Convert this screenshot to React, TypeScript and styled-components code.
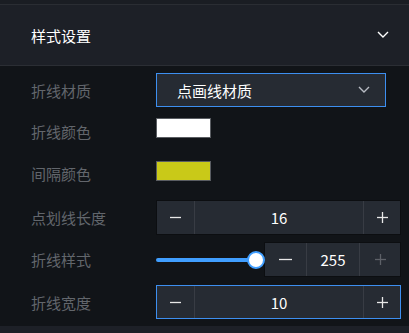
import React from 'react'
import styled, { createGlobalStyle } from 'styled-components'

const GlobalStyle = createGlobalStyle`
  body {
    margin: 0;
    background: #111418;
    font-family: 'Noto Sans CJK SC', 'Noto Sans', sans-serif;
  }
`

const Page = styled.div`
  width: 409px;
  height: 333px;
  background: #111418;
  display: flex;
  flex-direction: column;
`

const TopStrip = styled.div`
  height: 4px;
  background: #1a1d23;
  border-bottom: 1px solid #2a2d33;
`

const Header = styled.div`
  height: 60px;
  display: flex;
  align-items: center;
  justify-content: space-between;
  padding: 0 20px 0 31px;
  background: #1d2027;
  border-bottom: 1px solid #2b2e34;
  color: #fff;
  font-size: 15px;
`

const Body = styled.div`
  flex: 1;
  padding-top: 7px;
`

const BottomStrip = styled.div`
  height: 7px;
  background: #1d2027;
`

const Row = styled.div<{ $mt?: number; $h?: number }>`
  display: flex;
  align-items: center;
  height: ${(p) => p.$h ?? 34}px;
  margin-top: ${(p) => p.$mt ?? 0}px;
`

const Label = styled.div<{ $dy?: number }>`
  width: 125px;
  padding-left: 31px;
  color: #62666c;
  font-size: 15px;
  transform: translateY(${(p) => p.$dy ?? 0}px);
`

const Select = styled.div`
  width: 230px;
  height: 34px;
  box-sizing: border-box;
  display: flex;
  align-items: center;
  justify-content: space-between;
  padding: 0 15px 0 20px;
  background: #262b33;
  border: 1px solid #3d8ff0;
  color: #fff;
  font-size: 15px;
`

const Swatch = styled.div<{ $color: string }>`
  width: 55px;
  height: 20px;
  box-sizing: border-box;
  background: ${(p) => p.$color};
  border: 1px solid #5a5d62;
`

const NumberBox = styled.div<{ $w: number; $focus?: boolean }>`
  width: ${(p) => p.$w}px;
  height: ${(p) => (p.$focus ? 34 : 35)}px;
  box-sizing: border-box;
  display: flex;
  background: #262b33;
  border: 1px solid ${(p) => (p.$focus ? '#3d8ff0' : '#0c0e11')};
`

const StepButton = styled.div<{ $w: number; $side: 'left' | 'right'; $disabled?: boolean }>`
  width: ${(p) => p.$w}px;
  display: flex;
  align-items: center;
  justify-content: center;
  color: ${(p) => (p.$disabled ? '#5d6168' : '#e8e8e8')};
  ${(p) => (p.$side === 'left' ? 'border-right' : 'border-left')}: 1px solid #383c44;
`

const Value = styled.div`
  flex: 1;
  display: flex;
  align-items: center;
  justify-content: center;
  color: #fff;
  font-size: 15px;
`

const Slider = styled.div`
  width: 108px;
  position: relative;
  height: 20px;
  display: flex;
  align-items: center;
`

const Track = styled.div`
  width: 100px;
  height: 4px;
  border-radius: 2px;
  background: #409eff;
`

const Thumb = styled.div`
  position: absolute;
  left: 91px;
  top: 1px;
  width: 18px;
  height: 18px;
  box-sizing: border-box;
  border-radius: 50%;
  background: #fff;
  border: 2px solid #409eff;
`

const Chevron = ({ color, size }: { color: string; size: number }) => (
  <svg width={size} height={size * 0.6} viewBox="0 0 12 7" fill="none">
    <path d="M1 1 L6 6 L11 1" stroke={color} strokeWidth="1.4" />
  </svg>
)

const Minus = ({ size }: { size: number }) => (
  <svg width={size} height="11" viewBox={`0 0 ${size} 11`}>
    <line x1="0" y1="5.5" x2={size} y2="5.5" stroke="currentColor" strokeWidth="1.3" />
  </svg>
)

const Plus = () => (
  <svg width="11" height="11" viewBox="0 0 11 11">
    <line x1="0" y1="5.5" x2="11" y2="5.5" stroke="currentColor" strokeWidth="1.3" />
    <line x1="5.5" y1="0" x2="5.5" y2="11" stroke="currentColor" strokeWidth="1.3" />
  </svg>
)

const Stepper = ({ value, w, minusW, plusW, minusSize = 11, focus, plusDisabled }: {
  value: number
  w: number
  minusW: number
  plusW: number
  minusSize?: number
  focus?: boolean
  plusDisabled?: boolean
}) => (
  <NumberBox $w={w} $focus={focus}>
    <StepButton $w={minusW} $side="left">
      <Minus size={minusSize} />
    </StepButton>
    <Value>{value}</Value>
    <StepButton $w={plusW} $side="right" $disabled={plusDisabled}>
      <Plus />
    </StepButton>
  </NumberBox>
)

export default function App() {
  return (
    <Page>
      <GlobalStyle />
      <TopStrip />
      <Header>
        <span>样式设置</span>
        <Chevron color="#ffffff" size={12} />
      </Header>
      <Body>
        <Row>
          <Label>折线材质</Label>
          <Select>
            <span>点画线材质</span>
            <Chevron color="#b8bcc4" size={12} />
          </Select>
        </Row>
        <Row $mt={4}>
          <Label $dy={3}>折线颜色</Label>
          <Swatch $color="#ffffff" />
        </Row>
        <Row $mt={9}>
          <Label $dy={2}>间隔颜色</Label>
          <Swatch $color="#c9c918" />
        </Row>
        <Row $mt={12}>
          <Label>点划线长度</Label>
          <Stepper value={16} w={245} minusW={37} plusW={36} />
        </Row>
        <Row $mt={8} $h={35}>
          <Label>折线样式</Label>
          <Slider>
            <Track />
            <Thumb />
          </Slider>
          <Stepper value={255} w={137} minusW={41} plusW={40} minusSize={13} plusDisabled />
        </Row>
        <Row $mt={8}>
          <Label>折线宽度</Label>
          <Stepper value={10} w={245} minusW={37} plusW={36} focus />
        </Row>
      </Body>
      <BottomStrip />
    </Page>
  )
}
